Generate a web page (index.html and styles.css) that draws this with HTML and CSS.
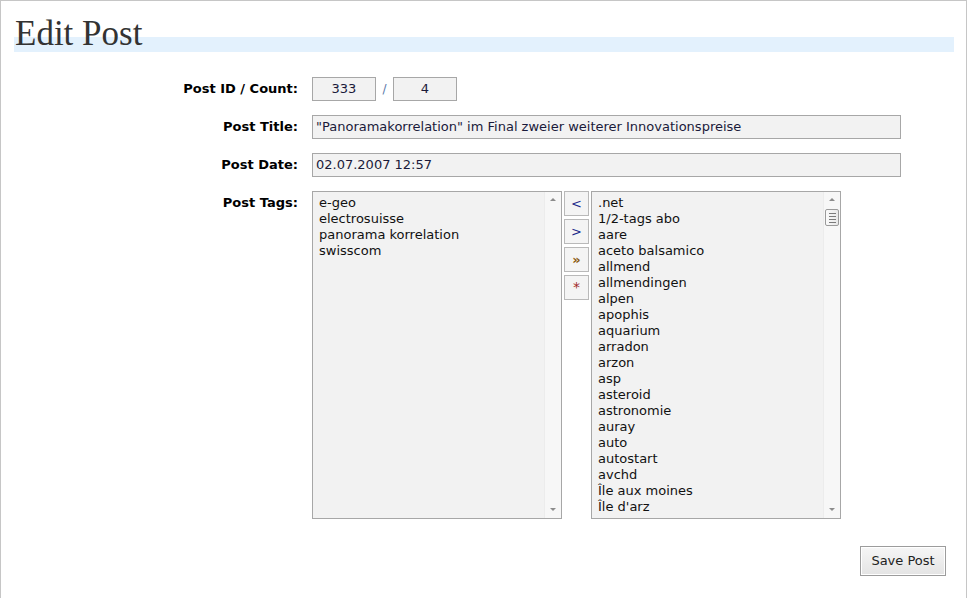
FILE: index.html
```html
<!DOCTYPE html>
<html>
<head>
<meta charset="utf-8">
<link rel="stylesheet" href="styles.css">
</head>
<body>
<div class="frame">
  <h1 class="title">Edit Post</h1>
  <div class="form">
    <div class="label">Post ID / Count:</div>
    <div class="ctrl idrow">
      <div class="field small">333</div>
      <span class="slash">/</span>
      <div class="field small">4</div>
    </div>

    <div class="label">Post Title:</div>
    <div class="ctrl"><div class="field wide">"Panoramakorrelation" im Final zweier weiterer Innovationspreise</div></div>

    <div class="label">Post Date:</div>
    <div class="ctrl"><div class="field wide">02.07.2007 12:57</div></div>

    <div class="label">Post Tags:</div>
    <div class="ctrl tags">
      <div class="list">
        <div class="items">
          <div>e-geo</div>
          <div>electrosuisse</div>
          <div>panorama korrelation</div>
          <div>swisscom</div>
        </div>
        <div class="sbar">
          <div class="arrow up"></div>
          <div class="track"></div>
          <div class="arrow down"></div>
        </div>
      </div>
      <div class="btns">
        <div class="btn blue">&lt;</div>
        <div class="btn blue">&gt;</div>
        <div class="btn brown">&raquo;</div>
        <div class="btn red">*</div>
      </div>
      <div class="list">
        <div class="items">
          <div>.net</div>
          <div>1/2-tags abo</div>
          <div>aare</div>
          <div>aceto balsamico</div>
          <div>allmend</div>
          <div>allmendingen</div>
          <div>alpen</div>
          <div>apophis</div>
          <div>aquarium</div>
          <div>arradon</div>
          <div>arzon</div>
          <div>asp</div>
          <div>asteroid</div>
          <div>astronomie</div>
          <div>auray</div>
          <div>auto</div>
          <div>autostart</div>
          <div>avchd</div>
          <div>Île aux moines</div>
          <div>Île d'arz</div>
        </div>
        <div class="sbar">
          <div class="arrow up"></div>
          <div class="thumb"><span></span><span></span><span></span><span></span></div>
          <div class="track"></div>
          <div class="arrow down"></div>
        </div>
      </div>
    </div>
  </div>
  <div class="actions">
    <div class="save">Save Post</div>
  </div>
</div>
</body>
</html>
```

FILE: styles.css
```css
html, body {
  margin: 0;
  padding: 0;
  background: #fff;
}
.frame {
  box-sizing: border-box;
  width: 967px;
  height: 598px;
  border: 1px solid #c6c6c6;
  border-bottom: none;
  font-family: "DejaVu Sans", Verdana, sans-serif;
  font-size: 13px;
  color: #000;
  overflow: hidden;
}
.title {
  margin: 14px 12px 0 13px;
  height: 37px;
  line-height: 37px;
  font-family: "Liberation Serif", Georgia, serif;
  font-weight: normal;
  font-size: 35px;
  color: #333;
  background: linear-gradient(to bottom, transparent 0, transparent 22px, #e3f1fd 22px, #e3f1fd 37px);
  padding-left: 1px;
}
.form {
  display: grid;
  grid-template-columns: 297px 1fr;
  column-gap: 14px;
  row-gap: 14px;
  margin-top: 25px;
}
.label {
  text-align: right;
  font-weight: bold;
  font-size: 13px;
  line-height: 24px;
  height: 24px;
  white-space: nowrap;
}
.ctrl {
  display: flex;
  align-items: flex-start;
}
.field {
  box-sizing: border-box;
  height: 24px;
  line-height: 22px;
  border: 1px solid #a7a7a7;
  background: #f2f2f2;
  color: #1a1a3a;
  padding: 0 3px;
  white-space: nowrap;
}
.small {
  width: 64px;
  text-align: center;
}
.wide {
  width: 589px;
}
.slash {
  width: 17px;
  height: 24px;
  text-align: center;
  line-height: 25px;
  color: #5a78a8;
  font-size: 12px;
}
.tags {
  gap: 2px;
}
.list {
  box-sizing: border-box;
  width: 250px;
  height: 328px;
  border: 1px solid #a7a7a7;
  background: #f2f2f2;
  display: flex;
  overflow: hidden;
}
.items {
  flex: 1;
  padding: 3px 0 0 6px;
  line-height: 16px;
  color: #111;
  overflow: hidden;
  white-space: nowrap;
}
.sbar {
  width: 16px;
  background: #f7f7f7;
  border-left: 1px solid #ececec;
  display: flex;
  flex-direction: column;
  align-items: center;
}
.arrow {
  width: 0;
  height: 0;
  border-left: 3px solid transparent;
  border-right: 3px solid transparent;
}
.arrow.up {
  border-bottom: 3px solid #8c8c8c;
  margin-top: 6px;
  margin-bottom: 8px;
}
.arrow.down {
  border-top: 3px solid #8c8c8c;
  margin-bottom: 7px;
}
.track {
  flex: 1;
}
.thumb {
  box-sizing: border-box;
  width: 14px;
  height: 17px;
  border: 1px solid #9a9a9a;
  border-radius: 2px;
  background: linear-gradient(to right, #fafafa, #e8e8e8);
  display: flex;
  flex-direction: column;
  align-items: center;
  justify-content: center;
  gap: 2px;
}
.thumb span {
  display: block;
  width: 7px;
  height: 1px;
  background: #7a7a7a;
}
.btns {
  display: flex;
  flex-direction: column;
  gap: 3px;
}
.btn {
  box-sizing: border-box;
  width: 25px;
  height: 25px;
  border: 1px solid #b9b9b9;
  background: #f4f4f4;
  text-align: center;
  line-height: 23px;
  font-size: 13px;
}
.btn.blue { color: #1b2a8a; }
.btn.brown { color: #8a5a10; font-size: 13px; font-weight: bold; }
.btn.red { color: #a02828; font-size: 14px; }
.actions {
  display: flex;
  justify-content: flex-end;
  margin-top: 27px;
  padding-right: 20px;
}
.save {
  box-sizing: border-box;
  width: 86px;
  height: 30px;
  border: 1px solid #9c9c9c;
  box-shadow: inset 0 0 0 1px #fff;
  background: linear-gradient(to bottom, #f6f6f6, #e4e4e4);
  text-align: center;
  line-height: 28px;
  color: #222;
}
```
